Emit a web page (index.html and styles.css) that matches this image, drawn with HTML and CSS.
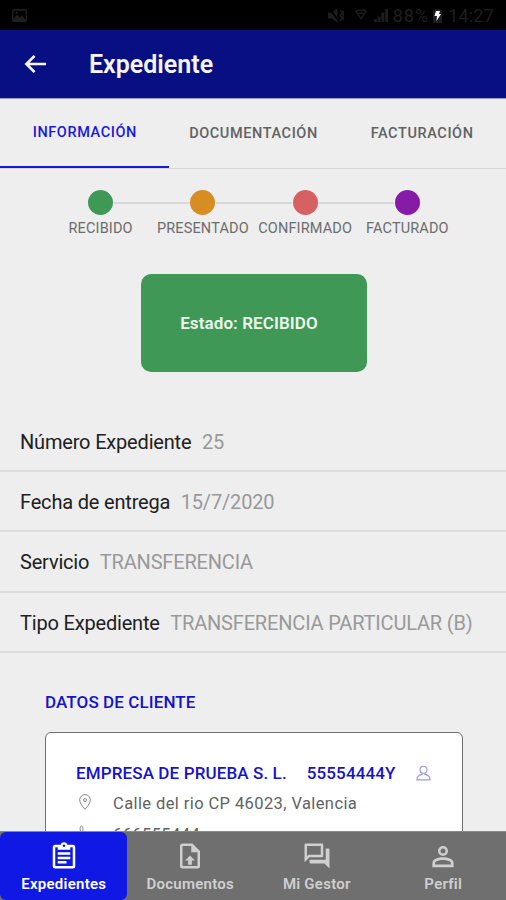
FILE: index.html
```html
<!DOCTYPE html>
<html lang="es">
<head>
  <meta charset="UTF-8">
  <meta name="viewport" content="width=device-width, initial-scale=1.0">
  <title>Expediente</title>
  <link rel="stylesheet" href="styles.css">
</head>
<body>
  <!-- Status bar -->
  <div class="status-bar">
    <svg class="status-picture" viewBox="0 0 16 14"><path fill-rule="evenodd" d="M2 0h12a2 2 0 0 1 2 2v10a2 2 0 0 1-2 2H2a2 2 0 0 1-2-2V2a2 2 0 0 1 2-2zM1.500 2v8l4-4 3 3 2-2 4 4V2zM4 3h2v2H4z"/></svg>
    <div class="status-right">
      <svg class="status-mute" viewBox="0 0 18 16"><path d="M0 5h4l6-5v16l-6-5H0z"/><path class="slash" d="M1 1l11 13"/><path class="wave" d="M13 2l2 3-2 3 2 3-2 3M16 3v10"/></svg>
      <svg class="status-wifi" viewBox="0 0 14 14"><path class="wave" d="M1 2q6-3 12 0L7 11zM4 5q3-1.500 6 0"/></svg>
      <svg class="status-signal" viewBox="0 0 15 14"><path d="M0 11h3v3H0zM4 8h3v6H4zM8 4h3v10H8zM12 0h3v14h-3z"/></svg>
      <span class="status-battery">88%</span>
      <svg class="status-bolt" viewBox="0 0 9 15"><path class="cell" d="M2 1h5v1h2v13H0V2h2z"/><path class="bolt" d="M3 3h4L6 6h2L3.500 13 4 8H1.500z"/></svg>
      <span class="status-clock">14:27</span>
    </div>
  </div>

  <!-- Top bar -->
  <header class="top-bar">
    <svg class="back" viewBox="0 0 24 20"><path d="M11 1.500L2.500 10l8.500 8.500M2.500 10H23"/></svg>
    <h1>Expediente</h1>
  </header>

  <nav class="tabs">
    <a class="tab active"><span>INFORMACIÓN</span></a>
    <a class="tab"><span>DOCUMENTACIÓN</span></a>
    <a class="tab"><span>FACTURACIÓN</span></a>
  </nav>

  <!-- Main content -->
  <main class="content">
    <ol class="steps">
      <li class="step received"><i class="dot"></i><span>RECIBIDO</span></li>
      <li class="step presented"><i class="dot"></i><span>PRESENTADO</span></li>
      <li class="step confirmed"><i class="dot"></i><span>CONFIRMADO</span></li>
      <li class="step invoiced"><i class="dot"></i><span>FACTURADO</span></li>
    </ol>

    <div class="state"><span>Estado: RECIBIDO</span></div>

    <dl class="details">
      <div class="row"><dt>Número Expediente</dt><dd>25</dd></div>
      <div class="row"><dt>Fecha de entrega</dt><dd>15/7/2020</dd></div>
      <div class="row"><dt>Servicio</dt><dd>TRANSFERENCIA</dd></div>
      <div class="row"><dt>Tipo Expediente</dt><dd>TRANSFERENCIA PARTICULAR (B)</dd></div>
    </dl>

    <section class="client">
      <h2>DATOS DE CLIENTE</h2>
      <div class="card">
        <div class="company">
          <span class="company-name">EMPRESA DE PRUEBA S. L.</span>
          <span class="company-id">55554444Y</span>
          <svg class="person" viewBox="0 0 16 17"><circle cx="8" cy="5" r="3.700"/><path d="M6.500 8.500v1.500Q1 11 1 15.800h14Q15 11 9.500 10V8.500"/></svg>
        </div>
        <div class="contact">
          <svg viewBox="0 0 12 16"><path d="M6 15.300Q.7 9.500.7 5.900a5.300 5.300 0 0 1 10.600 0Q11.300 9.500 6 15.300z"/><circle cx="6" cy="6" r="1.500"/></svg>
          <span>Calle del rio CP 46023, Valencia</span>
        </div>
        <div class="contact phone">
          <svg viewBox="0 0 12 16"><path d="M1 4q0-3 1.500-3T4 4 3 7q1 3 4 5l2-1 2 2q-2 2-4 1-6-4-6-10z"/></svg>
          <span>666555444</span>
        </div>
      </div>
    </section>
  </main>

  <!-- Bottom navigation -->
  <nav class="bottom-nav">
    <a class="nav-item active">
      <svg viewBox="0 0 24 24"><path fill-rule="evenodd" d="M19 3h-4.200a3 3 0 0 0-5.600 0H5a2 2 0 0 0-2 2v15a2 2 0 0 0 2 2h14a2 2 0 0 0 2-2V5a2 2 0 0 0-2-2zm-7-.3a1 1 0 1 1 0 2 1 1 0 0 1 0-2zM19 20H5V5h2v2h10V5h2zM7 9h10v2H7zm0 3.500h10v2H7zM7 16h7v2H7z"/></svg>
      <span>Expedientes</span>
    </a>
    <a class="nav-item">
      <svg viewBox="0 0 24 24"><path fill-rule="evenodd" d="M14 2H6a2 2 0 0 0-2 2v16a2 2 0 0 0 2 2h12a2 2 0 0 0 2-2V8zM18 20H6V4h7v5h5zM8 15.500l4-4 4 4h-2.500V19h-3v-3.500z"/></svg>
      <span>Documentos</span>
    </a>
    <a class="nav-item">
      <svg viewBox="0 0 24 24"><path fill-rule="evenodd" d="M15 4v7H5.200L4 12.200V4zm1-2H3a1 1 0 0 0-1 1v14l4-4h10a1 1 0 0 0 1-1V3a1 1 0 0 0-1-1zm5 4h-2v9H6v2a1 1 0 0 0 1 1h11l4 4V7a1 1 0 0 0-1-1z"/></svg>
      <span>Mi Gestor</span>
    </a>
    <a class="nav-item">
      <svg viewBox="0 0 24 24"><path fill-rule="evenodd" d="M12 4a4 4 0 1 1 0 8 4 4 0 0 1 0-8zm0 2a2 2 0 1 0 0 4 2 2 0 0 0 0-4zm0 7c3.500 0 8.500 1.300 8.500 4.500V21h-17v-3.500C3.500 14.300 8.500 13 12 13zm0 2.200c-3 0-6.300 1.200-6.300 2.300v1.300h12.600v-1.300c0-1.100-3.300-2.300-6.300-2.300z"/></svg>
      <span>Perfil</span>
    </a>
  </nav>
</body>
</html>
```

FILE: styles.css
```css
/* --- Vars and reset --- */
:root {
  --header: #080f82;
  --primary: #1512cf;
  --bg: #eeeeee;
  --line: #d7d7d7;
  --text: #202020;
  --muted: #999;
  --status: #1e1e1e;
  --font: Roboto, sans-serif;
}
* { box-sizing: border-box; margin: 0; padding: 0; }
body {
  display: flex;
  flex-direction: column;
  height: 100vh;
  overflow: hidden;
  font-family: var(--font);
  background: var(--bg);
  color: var(--text);
  white-space: nowrap;
}
svg { display: block; flex: none; }

/* --- Status bar --- */
.status-bar {
  display: flex;
  flex: none;
  justify-content: space-between;
  align-items: center;
  height: 30px;
  padding: 0 12px;
  background: #000;
  color: var(--status);
  font-size: 18px;
  letter-spacing: 0.5px;
}
.status-bar svg { fill: var(--status); }
.status-picture { width: 15px; height: 13px; }
.status-right { display: flex; align-items: center; }
.status-mute { width: 17px; height: 15px; margin-right: 10px; }
.status-wifi { width: 12px; height: 13px; margin-right: 7px; }
.status-signal { width: 14px; height: 13px; margin-right: 5px; }
.status-battery { margin-right: 4px; letter-spacing: 1px; }
.status-bolt { width: 9px; height: 15px; margin-right: 6px; }
.status-clock { letter-spacing: 0.2px; }
.status-bar .wave { fill: none; stroke: var(--status); stroke-width: 1.5; }
.status-bar .slash { stroke: #000; stroke-width: 2; }
.status-bar .bolt { fill: #fff; }

/* --- Top bar --- */
.top-bar {
  display: flex;
  flex: none;
  align-items: center;
  height: 69px;
  padding: 0 24px;
  background: var(--header);
  border-bottom: 1px solid #9a9acb;
  color: #f5f5fb;
}
.back { width: 23px; height: 20px; margin-right: 42px; fill: none; stroke: #f5f5fb; stroke-width: 2.8; }
.top-bar h1 { font-size: 25px; font-weight: 600; }

/* --- Tabs --- */
.tabs { display: flex; flex: none; height: 70px; border-bottom: 1px solid var(--line); }
.tab {
  display: flex;
  justify-content: center;
  align-items: center;
  width: 33.333%;
  padding: 0 0 1px 1px;
  font-size: 14.500px;
  font-weight: 500;
  letter-spacing: 0.6px;
  color: #626262;
}
.tab.active { color: #1a18dc; border-bottom: 2px solid #1a18dc; }

/* --- Steps --- */
.content { flex: 1; min-height: 0; overflow: hidden; }
.steps { display: flex; list-style: none; padding: 21px 47.500px 0 49.500px; }
.step {
  position: relative;
  flex: 1;
  display: flex;
  flex-direction: column;
  align-items: center;
  font-size: 14.500px;
  line-height: 16px;
  letter-spacing: 0.15px;
  color: #6c6c6c;
}
.dot { width: 25px; height: 25px; margin-bottom: 6px; border-radius: 50%; }
.step + .step::before {
  content: "";
  position: absolute;
  top: 12px;
  right: calc(50% + 13px);
  width: calc(100% - 26px);
  height: 2px;
  background: var(--line);
}
.received .dot { background: #3f9856; }
.presented .dot { background: #d88d22; }
.confirmed .dot { background: #d66062; }
.invoiced .dot { background: #861ba8; }

/* --- State --- */
.state {
  display: flex;
  justify-content: center;
  align-items: center;
  width: 226px;
  height: 98px;
  margin: 37px 0 0 141px;
  padding-right: 10px;
  border-radius: 10px;
  background: #3f9856;
  color: #eef8ee;
  font-size: 17px;
  font-weight: 600;
  letter-spacing: 0.1px;
}

/* --- Details --- */
.details { margin-top: 40px; }
.row {
  display: flex;
  align-items: center;
  gap: 10.500px;
  height: 60.200px;
  padding: 2px 0 0 20px;
  border-bottom: 2px solid #dcdcdc;
  font-size: 20px;
  letter-spacing: -0.18px;
}
.row dd { color: var(--muted); }

/* --- Client --- */
.client { padding: 37px 43px 0 45px; }
.client h2 { color: var(--primary); font-size: 17px; font-weight: 500; line-height: 24px; letter-spacing: 0.1px; }
.card { height: 180px; margin-top: 18px; padding: 28px 30px; border: 1.500px solid #707070; border-radius: 6px; background: #fff; }
.company { display: flex; align-items: center; height: 24px; color: var(--primary); font-size: 17px; font-weight: 500; letter-spacing: 0.12px; }
.company-id { margin-left: 20px; }
.person { width: 15px; height: 16px; margin-left: 20px; fill: none; stroke: #9b99e6; stroke-width: 1.2; }
.contact { display: flex; align-items: center; gap: 22px; height: 30px; padding: 8px 0 0 3px; color: #626262; font-size: 16.500px; letter-spacing: 0.4px; }
.contact svg { width: 12px; height: 16px; margin-bottom: 3px; fill: none; stroke: #888; stroke-width: 1; }
.phone { padding-top: 9px; }

/* --- Bottom nav --- */
.bottom-nav { display: flex; flex: none; height: 69px; background: #6f6f6f; border-top: 1px solid #888; }
.nav-item {
  display: flex;
  flex-direction: column;
  align-items: center;
  width: 25%;
  padding: 9px 0 0 1px;
  color: #cfcfcf;
  font-size: 15px;
  font-weight: 600;
  line-height: 18px;
  letter-spacing: 0.25px;
}
.nav-item svg { width: 30px; height: 30px; margin-bottom: 4px; fill: currentColor; }
.nav-item.active { background: #1018e4; border-radius: 6px; color: #fff; }
```
